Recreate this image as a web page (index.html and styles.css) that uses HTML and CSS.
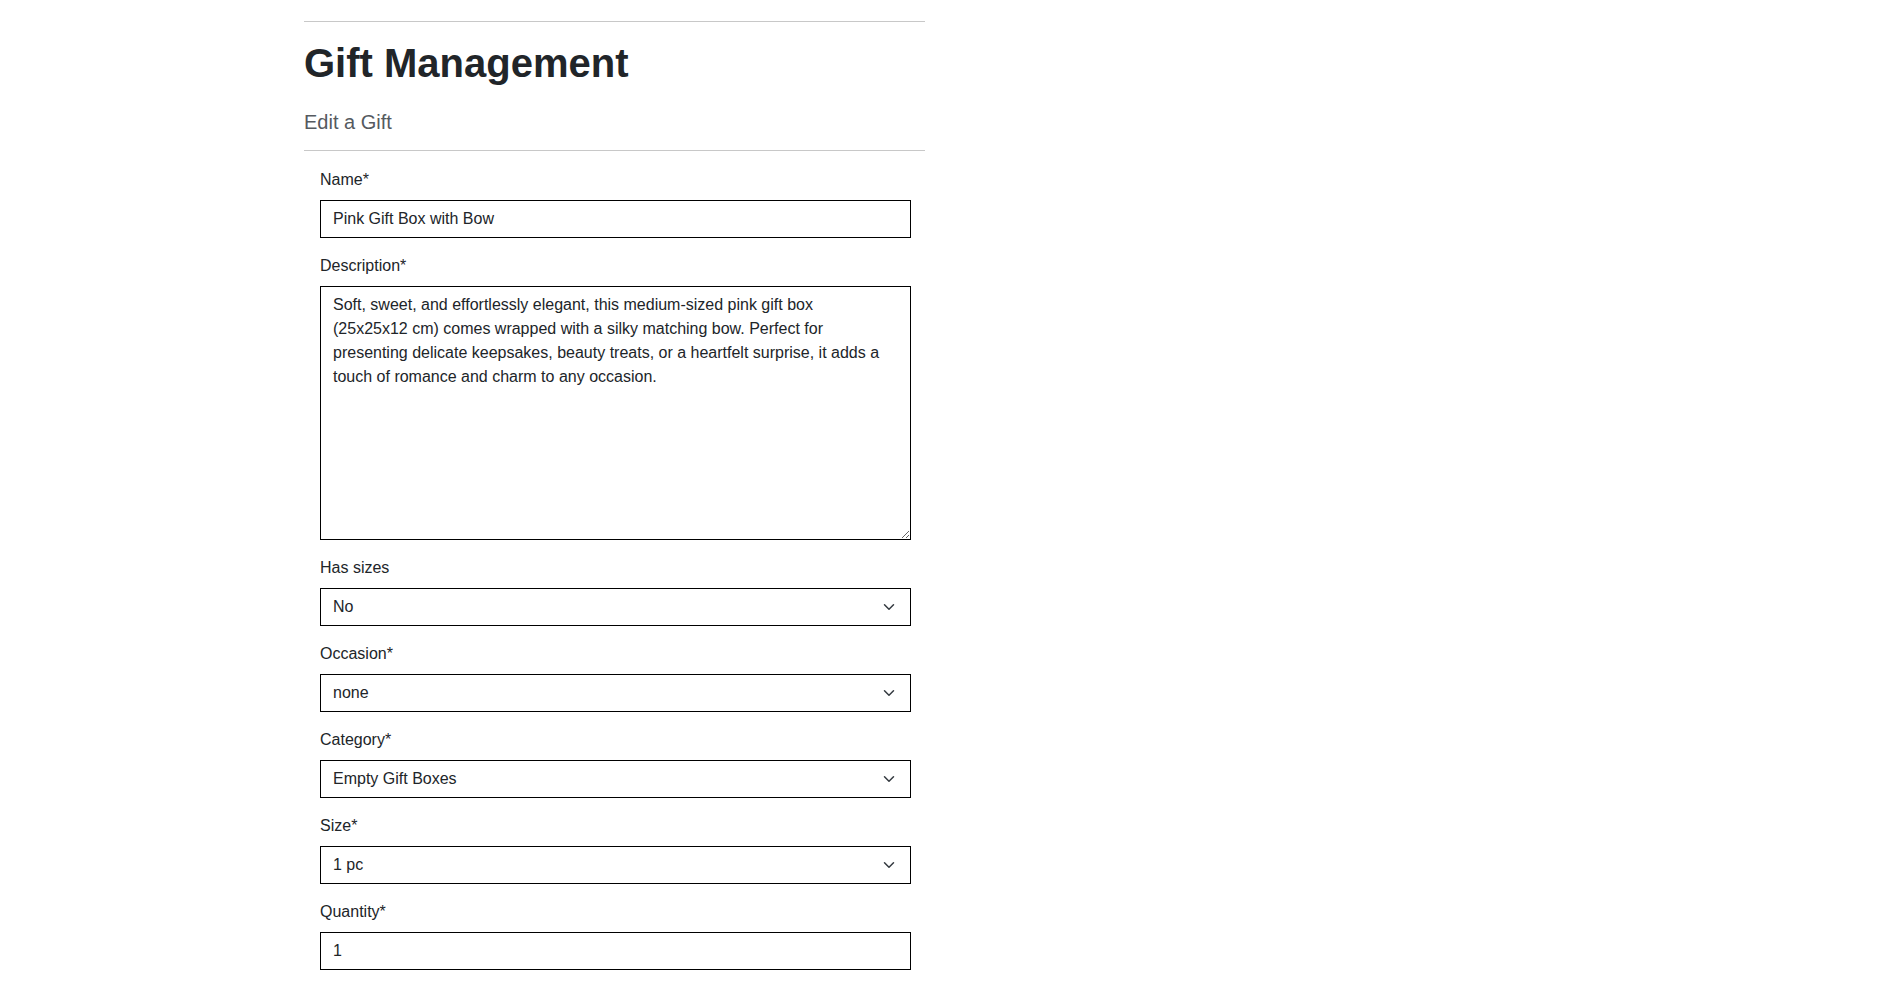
FILE: index.html
```html
<!DOCTYPE html>
<html lang="en">
<head>
<meta charset="utf-8">
<title>Gift Management</title>
<link rel="stylesheet" href="styles.css">
</head>
<body>
<main class="page">
  <hr class="rule">
  <h1 class="title">Gift Management</h1>
  <h5 class="subtitle">Edit a Gift</h5>
  <hr class="rule">
  <form class="gift-form">
    <div class="field">
      <label class="field-label" for="name">Name*</label>
      <input class="control" id="name" type="text" value="Pink Gift Box with Bow">
    </div>
    <div class="field">
      <label class="field-label" for="desc">Description*</label>
      <textarea class="control area" id="desc">Soft, sweet, and effortlessly elegant, this medium-sized pink gift box
(25x25x12 cm) comes wrapped with a silky matching bow. Perfect for
presenting delicate keepsakes, beauty treats, or a heartfelt surprise, it adds a
touch of romance and charm to any occasion.</textarea>
    </div>
    <div class="field">
      <label class="field-label" for="sizes">Has sizes</label>
      <div class="select-wrap">
        <select class="control select" id="sizes"><option>No</option><option>Yes</option></select>
        <svg class="chev" viewBox="0 0 16 16" width="12" height="12"><path d="M2 5l6 6 6-6" fill="none" stroke="#343a40" stroke-width="2" stroke-linecap="round" stroke-linejoin="round"/></svg>
      </div>
    </div>
    <div class="field">
      <label class="field-label" for="occasion">Occasion*</label>
      <div class="select-wrap">
        <select class="control select" id="occasion"><option>none</option></select>
        <svg class="chev" viewBox="0 0 16 16" width="12" height="12"><path d="M2 5l6 6 6-6" fill="none" stroke="#343a40" stroke-width="2" stroke-linecap="round" stroke-linejoin="round"/></svg>
      </div>
    </div>
    <div class="field">
      <label class="field-label" for="category">Category*</label>
      <div class="select-wrap">
        <select class="control select" id="category"><option>Empty Gift Boxes</option></select>
        <svg class="chev" viewBox="0 0 16 16" width="12" height="12"><path d="M2 5l6 6 6-6" fill="none" stroke="#343a40" stroke-width="2" stroke-linecap="round" stroke-linejoin="round"/></svg>
      </div>
    </div>
    <div class="field">
      <label class="field-label" for="size">Size*</label>
      <div class="select-wrap">
        <select class="control select" id="size"><option>1 pc</option></select>
        <svg class="chev" viewBox="0 0 16 16" width="12" height="12"><path d="M2 5l6 6 6-6" fill="none" stroke="#343a40" stroke-width="2" stroke-linecap="round" stroke-linejoin="round"/></svg>
      </div>
    </div>
    <div class="field">
      <label class="field-label" for="qty">Quantity*</label>
      <input class="control" id="qty" type="number" value="1">
    </div>
  </form>
</main>
</body>
</html>
```

FILE: styles.css
```css
* { box-sizing: border-box; }

body {
  margin: 0;
  background: #fff;
  color: #212529;
  font-family: "Liberation Sans", Arial, sans-serif;
  font-size: 16px;
  line-height: 1.5;
}

.page {
  width: 621px;
  margin-left: 304px;
  padding-top: 21px;
}

.rule {
  margin: 0;
  border: 0;
  border-top: 1px solid #c8c8c8;
}

.title {
  margin: 17px 0 23px;
  font-size: 40px;
  line-height: 48px;
  font-weight: 700;
  color: #212529;
}

.subtitle {
  margin: 0 0 16px;
  font-size: 20px;
  line-height: 24px;
  font-weight: 400;
  color: #555a5f;
}

.gift-form {
  padding: 17px 14px 0 16px;
}

.field {
  display: flex;
  flex-direction: column;
  margin-bottom: 16px;
}

.field-label {
  display: block;
  margin-bottom: 8px;
  font-size: 16px;
  line-height: 24px;
  color: #212529;
}

.control {
  display: block;
  width: 100%;
  height: 38px;
  padding: 6px 12px;
  border: 1px solid #000;
  border-radius: 0;
  background: #fff;
  color: #212529;
  font-family: "Liberation Sans", Arial, sans-serif;
  font-size: 16px;
  line-height: 24px;
  outline: none;
}

.area {
  height: 254px;
  resize: vertical;
  white-space: pre-wrap;
}

input[type=number]::-webkit-inner-spin-button,
input[type=number]::-webkit-outer-spin-button {
  -webkit-appearance: none;
  margin: 0;
}

.select-wrap {
  position: relative;
}

.select {
  -webkit-appearance: none;
  appearance: none;
  padding-right: 36px;
}

.chev {
  position: absolute;
  right: 16px;
  top: 13px;
  pointer-events: none;
}
```
